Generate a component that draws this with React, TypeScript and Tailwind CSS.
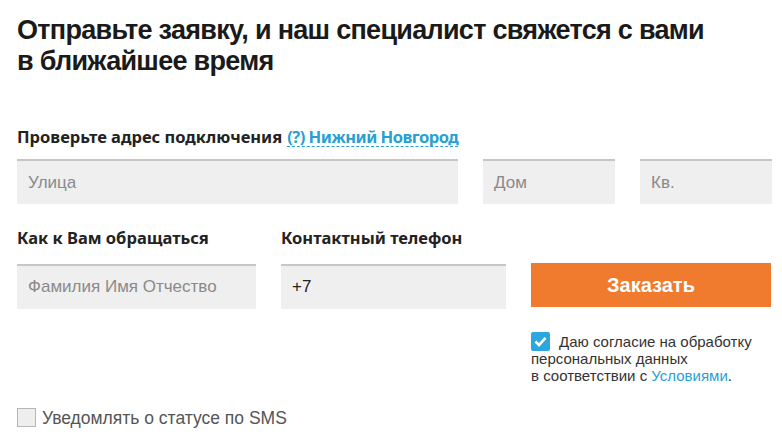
import React from "react";

const label = "text-[16.5px] font-bold text-[#222] font-['Noto_Sans',sans-serif]";
const field =
  "h-[45px] bg-[#efefef] border-t-2 border-[#c6c6c6] px-[11px] flex items-center text-[17px] font-['Liberation_Sans',Arial,sans-serif]";

function Field({ text, dark, className }: { text: string; dark?: boolean; className: string }) {
  return (
    <div className={`${field} ${dark ? "text-[#222]" : "text-[#8a8a8a]"} ${className}`}>{text}</div>
  );
}

export default function App() {
  return (
    <div className="w-[782px] h-[442px] bg-white overflow-hidden pl-[17px] pt-[15px]">
      <h1 className="text-[27px] leading-[31px] font-bold text-[#1a1a1a] font-['Liberation_Sans',sans-serif] tracking-[-0.7px]">
        Отправьте заявку, и наш специалист свяжется с вами
        <br />в ближайшее время
      </h1>

      <div className="mt-[48px] flex items-baseline gap-[5px]">
        <span className={label}>Проверьте адрес подключения</span>
        <span className="text-[16.5px] font-bold text-[#2a9fd4] font-['Noto_Sans',sans-serif] tracking-[-0.5px] border-b border-dashed border-[#2a9fd4] leading-[19px]">
          (?) Нижний Новгород
        </span>
      </div>

      <div className="mt-[9px] flex gap-[25px]">
        <Field text="Улица" className="w-[441px]" />
        <Field text="Дом" className="w-[132px]" />
        <Field text="Кв." className="w-[132px]" />
      </div>

      <div className="mt-[22px] flex">
        <div className="w-[264px] flex flex-col gap-[13px]">
          <span className={label}>Как к Вам обращаться</span>
          <Field text="Фамилия Имя Отчество" className="w-[239px]" />
        </div>
        <div className="w-[250px] flex flex-col gap-[13px]">
          <span className={label}>Контактный телефон</span>
          <Field text="+7" dark className="w-[225px]" />
        </div>
        <div className="flex flex-col pt-[37px]">
          <button className="w-[240px] h-[44px] bg-[#f07b2e] text-white text-[20px] font-bold font-['Liberation_Sans',Arial,sans-serif]">
            Заказать
          </button>
          <div className="mt-[25px] text-[15px] leading-[17px] text-[#333] font-['Liberation_Sans',Arial,sans-serif]">
            <div className="flex items-center gap-[9px]">
              <span className="w-[19px] h-[19px] rounded-[2px] bg-[#2ba6de] flex items-center justify-center">
                <svg width="13" height="11" viewBox="0 0 13 11">
                  <path d="M1.5 5.5 L5 9 L11.5 1.8" fill="none" stroke="white" strokeWidth="2.6" />
                </svg>
              </span>
              <span>Даю согласие на обработку</span>
            </div>
            <div className="-mt-[1px]">персональных данных</div>
            <div>
              в соответствии с <span className="text-[#2a9fd4]">Условиями</span>.
            </div>
          </div>
        </div>
      </div>

      <div className="mt-[21px] flex items-center gap-[6px] text-[17.5px] text-[#555] font-['Liberation_Sans',Arial,sans-serif]">
        <span className="w-[19px] h-[19px] border border-[#b5b5b5] bg-[#eee]" />
        <span>Уведомлять о статусе по SMS</span>
      </div>
    </div>
  );
}
